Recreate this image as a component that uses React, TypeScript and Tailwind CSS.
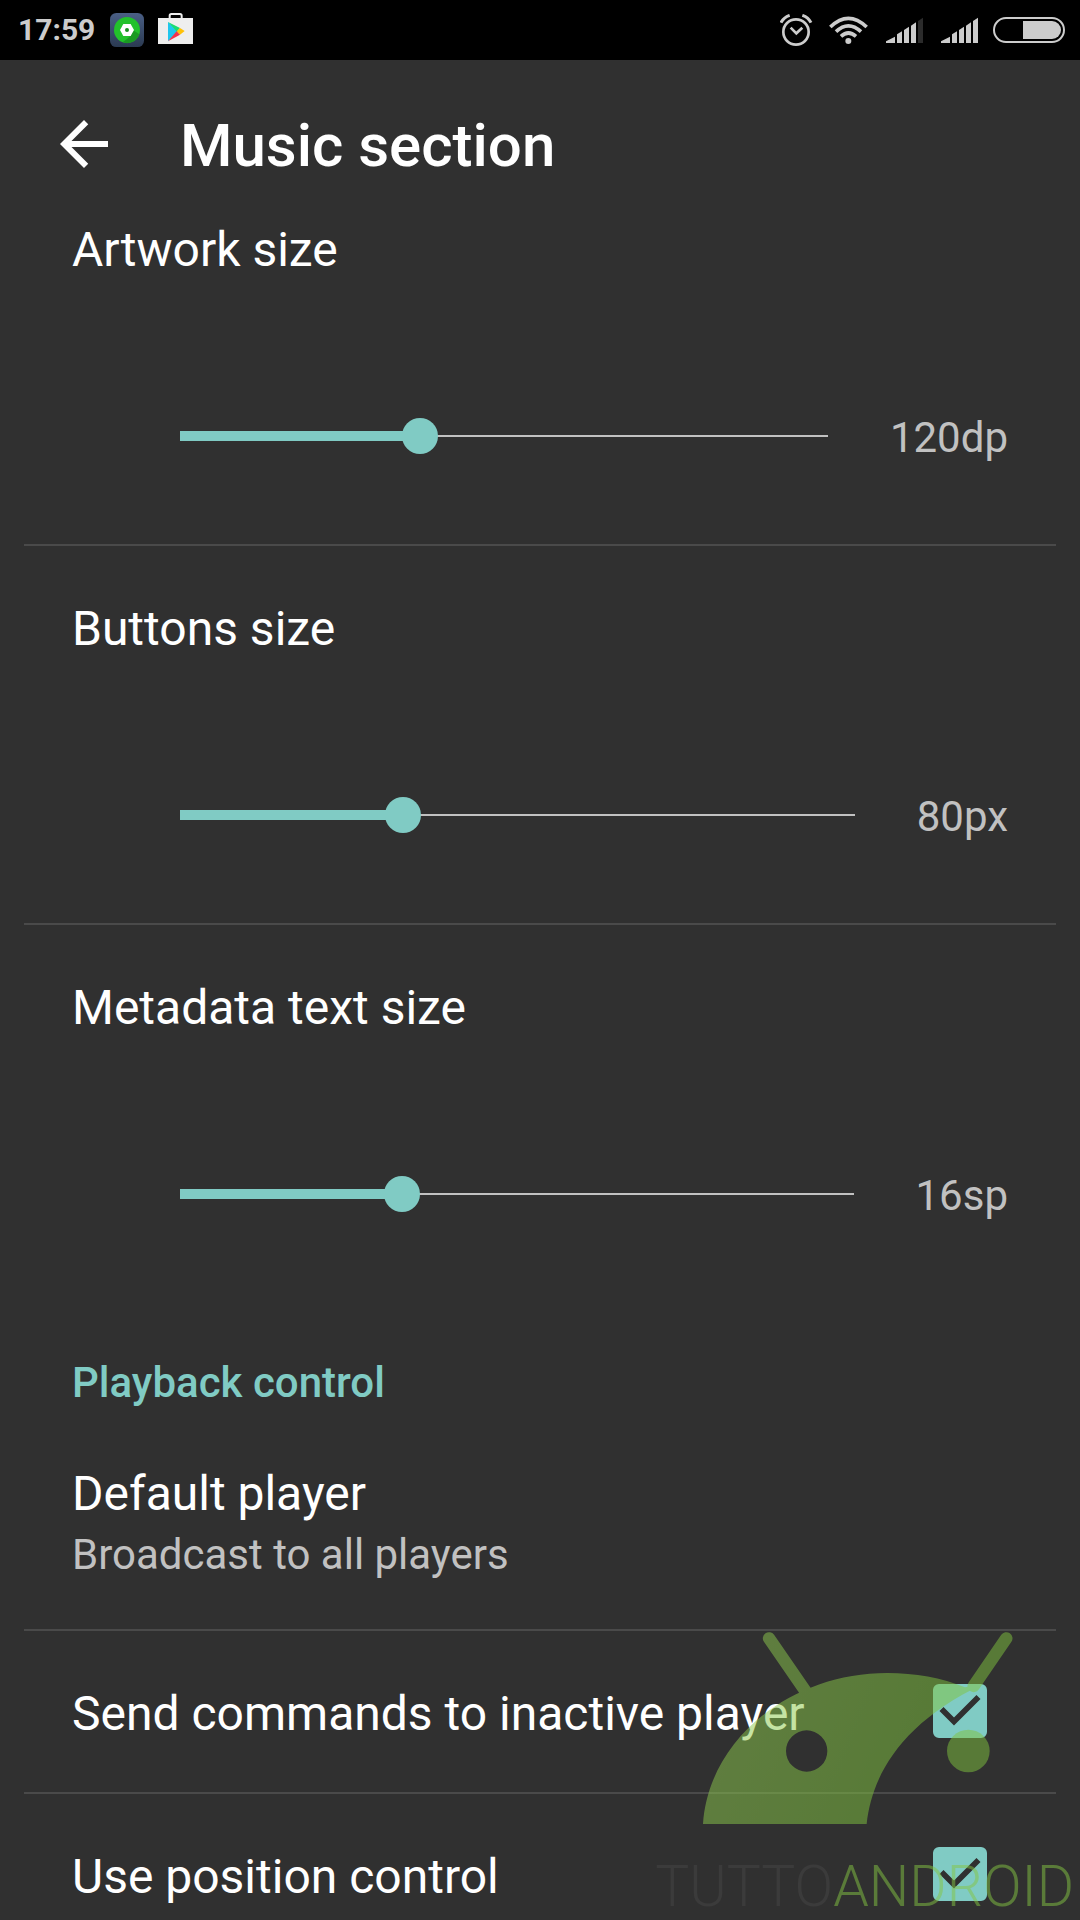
import { useState } from 'react';

interface SliderSettingProps {
  id: string;
  title: string;
  unit: string;
  initial: number;
  min: number;
  max: number;
  last?: boolean;
}

function SliderSetting({ id, title, unit, initial, min, max, last }: SliderSettingProps) {
  const [value, setValue] = useState(initial);
  const percent = ((value - min) / (max - min)) * 100;

  return (
    <section className={`mx-6 px-12 pt-[55px] first:pt-10 ${last ? '' : 'pb-[82px] border-b-2 border-[#4a4a4a]'}`}>
      <label htmlFor={id} className="block text-[48px] leading-[56px]">
        {title}
      </label>
      <div className="mt-[136px] flex items-start gap-[62px] pl-[108px]">
        {/* line, filled part and the input share one grid cell */}
        <div className="grid h-11 min-w-0 flex-1 items-center">
          <div className="h-[2px] bg-[#c1c1c1] [grid-area:1/1]" />
          <div className="h-[10px] bg-[#80cbc4] [grid-area:1/1]" style={{ width: `${percent}%` }} />
          <input
            id={id}
            type="range"
            min={min}
            max={max}
            value={value}
            onChange={(e) => setValue(Number(e.target.value))}
            className="-mx-[18px] h-9 w-[calc(100%+36px)] cursor-pointer appearance-none bg-transparent [grid-area:1/1] focus:outline-none [&::-webkit-slider-thumb]:h-9 [&::-webkit-slider-thumb]:w-9 [&::-webkit-slider-thumb]:appearance-none [&::-webkit-slider-thumb]:rounded-full [&::-webkit-slider-thumb]:bg-[#80cbc4]"
          />
        </div>
        <output htmlFor={id} className="text-[42px] leading-[48px] text-[#c1c1c1]">
          {value}{unit}
        </output>
      </div>
    </section>
  );
}

function CheckSetting({ id, title }: { id: string; title: string }) {
  const [checked, setChecked] = useState(true);

  return (
    <div className="mx-6 flex items-start justify-between border-b-2 border-[#4a4a4a] pt-[53px] pr-[69px] pb-12 pl-12">
      <label htmlFor={id} className="text-[48px] leading-[60px]">{title}</label>
      <span className="grid size-[54px] shrink-0">
        <input
          id={id}
          type="checkbox"
          checked={checked}
          onChange={(e) => setChecked(e.target.checked)}
          className="size-[54px] cursor-pointer appearance-none rounded-md border-[6px] border-[#c1c1c1] [grid-area:1/1] checked:border-[#80cbc4] checked:bg-[#80cbc4]"
        />
        {checked && (
          <svg viewBox="0 0 54 54" className="pointer-events-none size-[54px] [grid-area:1/1]">
            <path d="M8.5 25L21 37.5L45.5 13" fill="none" stroke="#303030" strokeWidth="5.7" />
          </svg>
        )}
      </span>
    </div>
  );
}

function SignalIcon({ weak }: { weak?: boolean }) {
  return (
    <svg viewBox="369 51 120 78" className="h-[26px] w-10" fill="#cccccc">
      <path d="M378 129V124L405 110V129Z" />
      <path d="M411 129V103L426 94V129Z" />
      <path d="M432 129V90L447 80V129Z" />
      <path d="M453 129V77L468 67V129Z" />
      <path d="M474 129V63L489 53V129Z" fill={weak ? '#2b2b2b' : '#cccccc'} />
    </svg>
  );
}

function StatusBar() {
  return (
    <div className="flex h-[60px] shrink-0 items-center justify-between bg-black pr-[15px] pl-[18px]">
      <div className="flex items-center">
        <span className="text-[30px] leading-[36px] font-bold text-[#cccccc]">17:59</span>
        <svg viewBox="0 0 102 102" className="ml-[15px] size-[34px]">
          <defs>
            <linearGradient id="tile" x1="0" y1="0" x2="0" y2="1">
              <stop offset="0" stopColor="#4a5f85" />
              <stop offset="1" stopColor="#2b3a52" />
            </linearGradient>
          </defs>
          <rect width="102" height="102" rx="19" fill="url(#tile)" />
          <circle cx="51" cy="51" r="39" fill="#22c12b" />
          <path d="M69 51L88 64A39 39 0 0 1 38 88L50 79L62 68Z" fill="#1a9a22" />
          <path d="M40 33H62L72 51L62 69H40L30 51Z" fill="#fff" />
          <circle cx="51" cy="51" r="6" fill="#18911f" />
        </svg>
        <svg viewBox="0 0 105 102" className="ml-[14px] h-[34px] w-[35px]">
          <path d="M35 18V8Q35 3 40 3H66Q71 3 71 8V18" fill="none" stroke="#eee" strokeWidth="6" />
          <rect y="15" width="105" height="78" fill="#eeeeee" />
          <path d="M30 27V85L61 55Z" fill="#1fc6ee" />
          <path d="M30 27L66 45L57 56Z" fill="#19dc72" />
          <path d="M66 45L80 54L66 65L56 55Z" fill="#ffc107" />
          <path d="M30 85L66 65L56 55Z" fill="#f43249" />
        </svg>
      </div>
      <div className="flex items-center gap-[15px]">
        <svg viewBox="60 39 102 96" className="h-8 w-[34px]" fill="none" stroke="#cccccc">
          <circle cx="108" cy="93" r="38" strokeWidth="8" />
          <path d="M92 80L109 97L127 80" strokeWidth="8" />
          <path d="M63 65Q71 49 89 43M153 65Q145 49 127 43" strokeWidth="9" />
        </svg>
        <svg viewBox="208 45 117 87" className="h-[29px] w-[39px]" fill="none" stroke="#cccccc" strokeWidth="11">
          <path d="M212 78Q266 26 321 78" />
          <path d="M229 92Q266 57 304 92" />
          <path d="M244 106Q266 86 289 106" />
          <circle cx="266" cy="120" r="9" fill="#cccccc" stroke="none" />
        </svg>
        <SignalIcon weak />
        <SignalIcon />
        <svg viewBox="699 51 216 78" className="h-[26px] w-[72px]">
          <rect x="702" y="54" width="210" height="72" rx="36" fill="none" stroke="#cccccc" strokeWidth="6" />
          <path d="M789 63H876A27 27 0 0 1 876 117H789Z" fill="#cccccc" />
        </svg>
      </div>
    </div>
  );
}

// Half transparent logo in the lower right corner
function Watermark() {
  return (
    <svg
      viewBox="0 0 1320 930"
      className="pointer-events-none absolute right-0 bottom-0 h-[310px] w-[440px] opacity-50"
    >
      <defs>
        <linearGradient id="leaf" gradientUnits="userSpaceOnUse" x1="300" y1="300" x2="800" y2="500">
          <stop offset="0" stopColor="#8eca4e" />
          <stop offset="1" stopColor="#80c43e" />
        </linearGradient>
      </defs>
      <path
        fillRule="evenodd"
        fill="url(#leaf)"
        d="M189 642C205 390 450 189 742 189C825 189 905 203 975 232L1030 222C780 340 695 500 680 642ZM438 423A62 62 0 1 0 562 423A62 62 0 1 0 438 423Z"
      />
      <path d="M387 85L496 243M1099 85L1001 228" stroke="url(#leaf)" strokeWidth="37" strokeLinecap="round" />
      <circle cx="985" cy="423" r="64" fill="#80c43e" />
      <text x="46" y="888" fontSize="171" className="font-['Roboto',sans-serif] font-light">
        <tspan fill="#464646">TUTTO</tspan>
        <tspan fill="#84c642">ANDROID</tspan>
      </text>
    </svg>
  );
}

export default function App() {
  return (
    <div className="relative flex h-screen flex-col overflow-hidden bg-[#303030] font-['Roboto',sans-serif] text-white">
      <StatusBar />

      <header className="flex shrink-0 items-start gap-[60px] pt-[50px] pl-12">
        <button type="button" aria-label="Back" className="flex h-[68px] w-[72px] cursor-pointer items-center justify-center">
          <svg viewBox="0 0 24 24" className="size-[72px] shrink-0" fill="currentColor">
            <path d="M20 11H7.83l5.59-5.59L12 4l-8 8 8 8 1.41-1.41L7.83 13H20v-2z" />
          </svg>
        </button>
        <h1 className="text-[60px] leading-[72px] font-medium">Music section</h1>
      </header>

      <main>
        <SliderSetting id="artwork" title="Artwork size" unit="dp" initial={120} min={46} max={246} />
        <SliderSetting id="buttons" title="Buttons size" unit="px" initial={80} min={47} max={147} />
        <SliderSetting id="metadata" title="Metadata text size" unit="sp" initial={16} min={0} max={48.5} last />

        <h2 className="mt-[139px] px-[72px] text-[42px] leading-[48px] font-medium text-[#80cbc4]">Playback control</h2>
        <button type="button" className="mx-6 mt-[59px] block w-[calc(100%-48px)] cursor-pointer border-b-2 border-[#4a4a4a] px-12 pb-[50px] text-left">
          <span className="block text-[48px] leading-[56px]">Default player</span>
          <span className="mt-[9px] block text-[42px] leading-[48px] text-[#c1c1c1]">Broadcast to all players</span>
        </button>
        <CheckSetting id="inactive" title="Send commands to inactive player" />
        <CheckSetting id="position" title="Use position control" />
      </main>

      <Watermark />
    </div>
  );
}
